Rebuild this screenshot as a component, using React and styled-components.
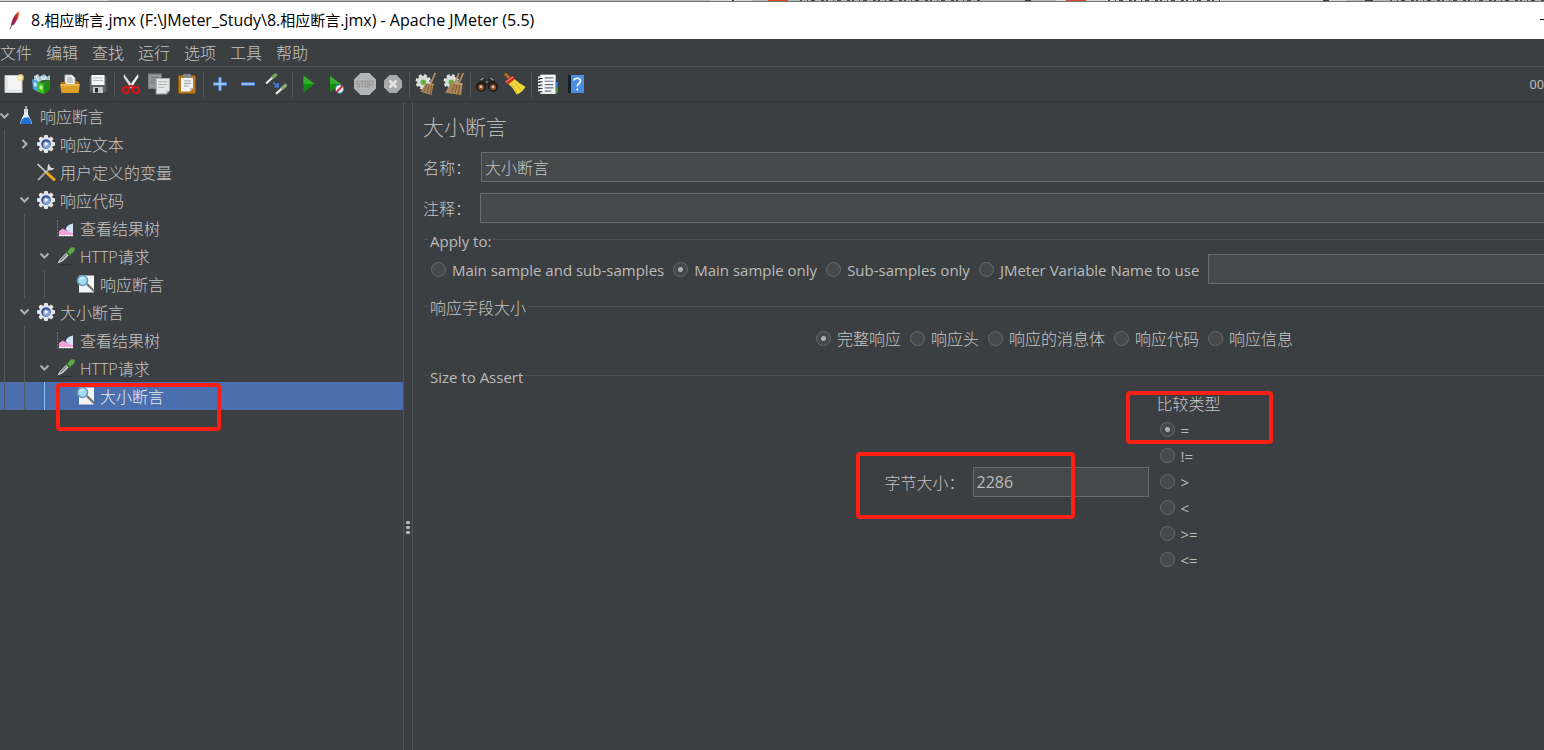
import React from 'react';
import styled, { createGlobalStyle } from 'styled-components';

const color = {
  bg: '#3c3f41',
  text: '#bbbbbb',
  thinText: '#c6c6c6',
  line: '#515456',
  field: '#45494a',
  fieldBorder: '#696b6c',
  selection: '#4b6eaf',
  mark: '#ff1f14',
};

const GlobalStyle = createGlobalStyle`
  *, *::before, *::after { box-sizing: border-box; }
  html, body { margin: 0; background: ${color.bg}; }
  body {
    font-family: 'Open Sans', 'Noto Sans CJK SC', sans-serif;
    font-size: 15px;
    color: ${color.text};
    overflow-x: hidden;
  }
`;

/* ---------- window frame ---------- */

const Window = styled.div`
  display: flex;
  flex-direction: column;
  min-height: 100vh;
  background: ${color.bg};
`;

const BackgroundTabs = styled.svg`
  display: block;
  width: 100%;
  height: 2px;
  background: #b5bcbe;
`;

const TitleBar = styled.header`
  display: flex;
  align-items: center;
  height: 37px;
  padding-left: 7px;
  gap: 8px;
  background: #ffffff;
  color: #000000;
`;

const Title = styled.h1`
  margin: 0;
  padding-bottom: 2px;
  font-size: 16px;
  line-height: 20px;
  font-weight: 400;
  white-space: nowrap;
`;

const PlanName = styled.span`
  font-size: 15px;
`;

const MinimizeButton = styled.button`
  width: 4px;
  height: 20px;
  margin-left: auto;
  padding: 0;
  border: 0;
  background: linear-gradient(#000, #000) 0 8px / 4px 1px no-repeat;
`;

const MenuBar = styled.nav`
  display: flex;
  align-items: center;
  gap: 14px;
  height: 28px;
  border-bottom: 1px solid ${color.line};
`;

const MenuButton = styled.button`
  padding: 0;
  border: 0;
  background: none;
  color: ${color.thinText};
  font-family: inherit;
  font-size: 16px;
  font-weight: 300;
  line-height: 24px;
`;

const ToolBar = styled.div`
  display: flex;
  align-items: center;
  height: 35px;
  border-bottom: 1px solid #333638;
`;

const ToolButton = styled.button`
  display: flex;
  flex: none;
  align-items: center;
  justify-content: center;
  width: 28px;
  height: 28px;
  padding: 0;
  border: 0;
  background: none;
`;

const ToolSeparator = styled.span`
  flex: none;
  width: 1px;
  height: 25px;
  margin: 0 2px;
  background: #55585a;
`;

const Timer = styled.span`
  margin-left: auto;
  font-family: Roboto, sans-serif;
  font-size: 13px;
  white-space: nowrap;
`;

const Workspace = styled.main`
  display: flex;
  flex: 1;
`;

/* ---------- tree ---------- */

const TreePane = styled.ul`
  flex: none;
  width: 403px;
  margin: 0;
  padding: 0;
  list-style: none;
`;

const TreeRow = styled.li`
  position: relative;
  display: flex;
  align-items: center;
  height: 28px;
  font-size: 16px;
  font-weight: 300;
  background: ${(p) => (p.$selected ? color.selection : 'transparent')};
  color: ${(p) => (p.$selected ? '#eaeaea' : color.thinText)};
`;

const Guide = styled.span`
  flex: none;
  width: 20px;
  height: 28px;
  padding-left: 4px;

  &::before {
    content: '';
    display: block;
    width: 1px;
    height: 100%;
    background: ${(p) => (p.$active ? '#7cc0f5' : '#565a5c')};
  }
`;

const Twisty = styled.span`
  display: flex;
  flex: none;
  width: 16px;
  height: 28px;
  align-items: center;
`;

const NodeIcon = styled.span`
  display: flex;
  flex: none;
  width: 20px;
  margin-right: 4px;
`;

const NodeName = styled.span`
  padding-top: 2px;
  line-height: 26px;
  white-space: nowrap;
`;

/* ---------- splitter ---------- */

const Splitter = styled.div`
  display: flex;
  flex: none;
  flex-direction: column;
  align-items: center;
  gap: 2px;
  width: 10px;
  padding-top: 419px;
  border: solid ${color.line};
  border-width: 0 1px;
`;

const Grip = styled.i`
  width: 4px;
  height: 3px;
  border-radius: 1px;
  background: #b0b2b3;
`;

/* ---------- form ---------- */

const Form = styled.form`
  flex: 1;
  min-width: 0;
  padding: 12px 0 0 10px;
`;

const Heading = styled.h2`
  margin: 0 0 12px;
  font-size: 21px;
  line-height: 26px;
  font-weight: 300;
`;

const Fields = styled.div`
  display: flex;
  flex-direction: column;
  gap: 11px;
`;

const FieldRow = styled.div`
  display: flex;
  align-items: center;
`;

const FieldLabel = styled.label`
  flex: none;
  width: ${(p) => p.$width}px;
  padding-top: 2px;
  color: ${color.thinText};
  font-size: 16px;
  font-weight: 300;
  line-height: 28px;
  white-space: nowrap;
`;

const TextField = styled.input`
  flex: ${(p) => (p.$width ? 'none' : 1)};
  width: ${(p) => (p.$width ? p.$width + 'px' : 'auto')};
  min-width: 0;
  height: 30px;
  padding: 0 3px;
  border: 1px solid ${color.fieldBorder};
  border-right-width: ${(p) => (p.$width ? 1 : 0)}px;
  border-radius: 0;
  outline: 0;
  background: ${color.field};
  color: ${(p) => (p.$cjk ? color.thinText : color.text)};
  font-family: inherit;
  font-size: 16px;
  font-weight: ${(p) => (p.$cjk ? 300 : 400)};
`;

const Group = styled.fieldset`
  min-width: 0;
  margin: ${(p) => p.$space}px 0 0 2px;
  padding: 0;
  border: 0;
  border-top: 1px solid ${color.line};
`;

const GroupTitle = styled.legend`
  height: 20px;
  margin-left: 3px;
  padding: 2px 2px 0;
  line-height: 20px;
  color: ${(p) => (p.$cjk ? color.thinText : color.text)};
  font-size: ${(p) => (p.$cjk ? 16 : 15)}px;
  font-weight: ${(p) => (p.$cjk ? 300 : 400)};
`;

const OptionRow = styled.div`
  display: flex;
  align-items: center;
  height: 30px;
  gap: 9px;
  margin-top: ${(p) => p.$top}px;
  padding-left: ${(p) => p.$indent}px;
  justify-content: ${(p) => (p.$center ? 'center' : 'flex-start')};
`;

const OptionLabel = styled.label`
  display: flex;
  flex: none;
  align-items: center;
  gap: 6px;
  height: 26px;
  color: ${(p) => (p.$cjk ? color.thinText : color.text)};
  font-size: ${(p) => (p.$cjk ? 16 : 15)}px;
  font-weight: ${(p) => (p.$cjk ? 300 : 400)};
  line-height: 26px;
  white-space: nowrap;
`;

const OptionText = styled.span`
  padding-top: 2px;
  line-height: 24px;
`;

const Radio = styled.input`
  appearance: none;
  flex: none;
  width: 15px;
  height: 15px;
  margin: 0;
  border: 1px solid ${color.fieldBorder};
  border-radius: 50%;
  background: ${color.field};

  &:checked {
    background: radial-gradient(circle, #adadad 2px, ${color.field} 3px);
  }
`;

const SizeRow = styled.div`
  display: flex;
  align-items: center;
  justify-content: center;
  gap: 8px;
  margin-top: 7px;
  padding-left: 140px;
`;

const ByteSize = styled.div`
  position: relative;
  display: flex;
  align-items: center;
`;

const Comparison = styled.div`
  position: relative;
  width: 68px;
`;

const ComparisonTitle = styled.div`
  height: 24px;
  color: ${color.thinText};
  font-size: 16px;
  font-weight: 300;
  line-height: 24px;
`;

const ComparisonOptions = styled.div`
  display: flex;
  flex-direction: column;
  padding-left: 3px;
`;

const Mark = styled.span`
  position: absolute;
  z-index: 1;
  left: ${(p) => p.$x}px;
  top: ${(p) => p.$y}px;
  width: ${(p) => p.$w}px;
  height: ${(p) => p.$h}px;
  border: 4px solid ${color.mark};
  border-radius: 4px;
  pointer-events: none;
`;

/* ---------- icons ---------- */

const Svg = ({ size = 20, children }) => (
  <svg width={size} height={size} viewBox="0 0 20 20" aria-hidden="true">
    {children}
  </svg>
);

const FeatherIcon = () => (
  <svg width="16" height="20" viewBox="0 0 16 20" aria-hidden="true">
    <defs>
      <linearGradient id="feather" x1="1" y1="0" x2="0" y2="1">
        <stop offset="0" stopColor="#f49a23" />
        <stop offset=".45" stopColor="#d8232f" />
        <stop offset="1" stopColor="#6a2468" />
      </linearGradient>
    </defs>
    <path d="M12.500 0C8.500 2 5 7 4 14.500L6.500 14C10 10 12.500 5 12.500 0Z" fill="url(#feather)" />
    <path d="M10.500 3L5 13.500L3 18" stroke="#7c2350" strokeWidth=".8" fill="none" />
  </svg>
);

const NewIcon = () => (
  <Svg>
    <path d="M1 1.500H18V18.500H1Z" fill="#f4f4f4" stroke="#c9c9c9" />
    <path d="M3 3V17M4 16.500H17" stroke="#d8d8d8" />
    <circle cx="16.500" cy="3.500" r="3.500" fill="#f2e27a" opacity=".75" />
    <circle cx="16.500" cy="3.500" r="1.600" fill="#fffce0" />
  </Svg>
);

const TemplatesIcon = () => (
  <Svg>
    <path d="M2 2L6 0L8 3L12 0L15 3L18 1V10H2Z" fill="#a8c8d4" />
    <path d="M4 2L7 8M9 2L12 8M14 2L11 8" stroke="#e8f3f7" strokeWidth="1.300" />
    <path d="M0 5L6 7V18L1 15Z" fill="#4ba4dc" />
    <path d="M1.500 8L4.500 9V13L2 12Z" fill="#c5e6f8" />
    <path d="M6 8L12 10V20L6 18Z" fill="#35c01d" />
    <path d="M12 10L18 6V16L12 20Z" fill="#1d8a10" />
    <path d="M7.500 11L10.500 12V16L7.500 15Z" fill="#b8f0a5" />
    <path d="M6 8L11 6L18 6L12 10Z" fill="#2c6f25" />
  </Svg>
);

const OpenIcon = () => (
  <Svg>
    <path d="M5 1H12L15 4V12H5Z" fill="#f3f3f3" stroke="#b9b9b9" />
    <path d="M7 4H12M7 6H13M7 8H13" stroke="#9a9a9a" />
    <path d="M1 8H5L6 10H15L16 7L19 8V18H1Z" fill="#b9780c" />
    <path d="M0 10H20L18.500 19H1.500Z" fill="#dda02a" />
    <path d="M1 11H19" stroke="#f8d480" />
  </Svg>
);

const SaveIcon = () => (
  <Svg>
    <path d="M1 1.500H19V19H2.500L1 17.500Z" fill="#596167" stroke="#33383b" />
    <rect x="3.500" y="1" width="13" height="10" fill="#f3f6f8" />
    <path d="M5 4H15M5 6.500H15" stroke="#a8c0d4" />
    <rect x="5" y="13" width="10" height="6" fill="#c5c9cb" />
    <rect x="7" y="14" width="3" height="4.500" fill="#24282a" />
  </Svg>
);

const CutIcon = () => (
  <Svg>
    <path d="M3 0L12.500 13L10 14.500L2.500 3Z" fill="#d8dadb" />
    <path d="M17 0L7.500 13L10 14.500L17.500 3Z" fill="#f3f3f3" />
    <circle cx="5" cy="16" r="3" fill="none" stroke="#d81414" strokeWidth="2.200" />
    <circle cx="15" cy="16" r="3" fill="none" stroke="#d81414" strokeWidth="2.200" />
    <path d="M7 14L10 11.500L13 14" stroke="#d81414" strokeWidth="2" fill="none" />
  </Svg>
);

const CopyIcon = () => (
  <Svg size={22}>
    <path d="M.500 1H12V14H.500Z" fill="#97999a" stroke="#7f8182" />
    <path d="M2.500 4H10M2.500 6.500H8M2.500 9H7" stroke="#7b7d7e" />
    <path d="M7.500 5H19.500V16L16.500 19H7.500Z" fill="#e6e7e7" stroke="#a9aaaa" />
    <path d="M9.500 8H17.500M9.500 10.500H17.500M9.500 13H15" stroke="#aeb0b0" />
    <path d="M16.500 19V16H19.500Z" fill="#bcbebe" />
  </Svg>
);

const PasteIcon = () => (
  <Svg>
    <rect x="1.500" y="1.500" width="17" height="18" rx="1" fill="#b97a22" stroke="#8a5511" />
    <path d="M4 4H16V14L13 17.500H4Z" fill="#f3f3f3" />
    <rect x="6" y="0" width="8" height="4" rx="1" fill="#858a8c" />
    <path d="M7 7H14M7 9.500H14M7 12H12" stroke="#9b9d9e" />
    <path d="M13 17.500V14H16Z" fill="#bcbebe" />
  </Svg>
);

const PlusIcon = () => (
  <Svg>
    <path d="M10 3V17M3 10H17" stroke="#4b8be0" strokeWidth="3.400" />
    <path d="M10 4V16M4 10H16" stroke="#b5d4fa" strokeWidth="1.300" />
  </Svg>
);

const MinusIcon = () => (
  <Svg>
    <path d="M3 10H17" stroke="#4b8be0" strokeWidth="3.400" />
    <path d="M4 10H16" stroke="#b5d4fa" strokeWidth="1.300" />
  </Svg>
);

const ToggleIcon = () => (
  <Svg size={22}>
    <path d="M1 9.500L7 4" stroke="#e3e6e3" strokeWidth="2" />
    <path d="M6.500 4.500L10.500 1" stroke="#6fa85c" strokeWidth="3" />
    <path d="M10 19L15.500 14" stroke="#e3e6e3" strokeWidth="2" />
    <path d="M15 14.500L19.500 10.500" stroke="#8aad7a" strokeWidth="3" />
    <path d="M7.500 8.500L11.500 12M8.500 12.500H12V9" stroke="#3f7fdc" strokeWidth="1.500" fill="none" />
  </Svg>
);

const RunIcon = () => (
  <Svg>
    <path d="M4.500 1.500L15.500 10L4.500 18.500Z" fill="#168a14" />
    <path d="M4.500 1.500L15.500 10H4.500Z" fill="#35ad2c" />
  </Svg>
);

const RunNoPauseIcon = () => (
  <Svg>
    <path d="M3 2L14 10L3 18Z" fill="#168a14" />
    <path d="M3 2L14 10H3Z" fill="#35ad2c" />
    <circle cx="12.500" cy="15" r="4.200" fill="#e8eff8" stroke="#4c7cc0" />
    <path d="M9.500 18L15.500 12" stroke="#d8262a" strokeWidth="1.800" />
  </Svg>
);

const StopIcon = () => (
  <Svg size={22}>
    <path d="M6 0H14L20 6V14L14 20H6L0 14V6Z" fill="#b4b4b4" />
    <g fill="none" stroke="#9c9c9c" strokeWidth="1.200">
      <path d="M5 7.500H2.500V10H5V12.500H2.500M6 7.500H9M7.500 7.500V13M14 13V7.500H17V10.500H14" />
      <rect x="10" y="7.500" width="2.500" height="5" />
    </g>
  </Svg>
);

const ShutdownIcon = () => (
  <Svg>
    <path d="M6.500 1H13.500L19 6.500V13.500L13.500 19H6.500L1 13.500V6.500Z" fill="#a9a9a9" />
    <path d="M6.500 6.500L13.500 13.500M13.500 6.500L6.500 13.500" stroke="#e4e4e4" strokeWidth="2.600" />
  </Svg>
);

const ClearIcon = ({ all }) => (
  <Svg size={22}>
    <circle cx="7.500" cy="8" r="5.500" fill="#dfe0e0" stroke="#e4e5e5" strokeWidth="3" strokeDasharray="2.400 1.900" />
    <circle cx="7.500" cy="8" r="5" fill="#d9dada" />
    <circle cx="7.500" cy="8.500" r="2.500" fill="#63b43c" />
    <path d="M18.500 0L14.500 9" stroke="#b48d62" strokeWidth="1.600" />
    {all && <path d="M14.500 0L11 9" stroke="#b48d62" strokeWidth="1.600" />}
    <path d={all ? 'M8 8L18 9L16.500 20L2 18Z' : 'M10 9L17 10L15 20L5 17Z'} fill="#a98459" />
    <path d="M11 10L8 17M13 10L11 18M15 10L14 19" stroke="#7c5a36" strokeWidth=".9" />
    <path d="M10 9.500L17 10.500" stroke="#d0ae82" />
  </Svg>
);

const SearchIcon = () => (
  <Svg size={22}>
    <path d="M4 4H8L10 7L12 4H16L19 12H1Z" fill="#2b2a29" />
    <path d="M4 6.500L7 4.500M13 4.500L16 6.500M9 8H11" stroke="#9c9a98" strokeWidth="1.200" />
    <circle cx="4.500" cy="12.500" r="4" fill="#3a2418" stroke="#191817" strokeWidth="1.200" />
    <circle cx="15.500" cy="12.500" r="4" fill="#3a2418" stroke="#191817" strokeWidth="1.200" />
    <circle cx="4.500" cy="13" r="2.600" fill="#93562c" />
    <circle cx="15.500" cy="13" r="2.600" fill="#93562c" />
    <circle cx="4.500" cy="12.500" r="1.200" fill="#d9c8bc" />
    <circle cx="15.500" cy="12.500" r="1.200" fill="#d9c8bc" />
  </Svg>
);

const BroomIcon = () => (
  <Svg size={22}>
    <path d="M1 .500L5.500 5.500" stroke="#b8651d" strokeWidth="2.800" />
    <path d="M3.500 9.500L9 5Q13 9 19.500 12.500Q17 17.500 11.500 19.500Q8 13 3.500 9.500Z" fill="#f0d83a" />
    <path d="M1 7.500L7.500 2.500L10 5.500L3.500 10.500Z" fill="#cf2a1e" />
    <path d="M1.500 8.500L8.500 3.500" stroke="#f2b5a8" strokeWidth=".8" />
    <path d="M7 11L12 18M10 9L16 16" stroke="#d0b128" strokeWidth=".8" />
  </Svg>
);

const LogIcon = () => (
  <Svg size={22}>
    <rect x="3" y="1.500" width="14" height="17.500" fill="#f7f7f7" />
    <path d="M7 4.500H15M7 7.500H15M7 10.500H15M7 13.500H15M7 16.500H13" stroke="#66748a" strokeWidth="1.100" />
    <path d="M1 4H5M1 7H5M1 10H5M1 13H5M1 16H5" stroke="#f7f7f7" strokeWidth="1.800" />
    <path d="M2 5H5M2 8H5M2 11H5M2 14H5M2 17H5" stroke="#1d1d1d" strokeWidth=".9" />
    <rect x="17" y="8" width="2" height="5" fill="#2a7fe0" />
    <rect x="17" y="13" width="2" height="5" fill="#3aa630" />
  </Svg>
);

const HelpIcon = () => (
  <Svg>
    <path d="M2 1H18V19H2Z" fill="#4b8fe2" />
    <path d="M2 1H5V19H2Z" fill="#131c2b" />
    <path d="M8 6.500C8 3.500 14.500 3.500 14.500 7C14.500 9.500 11.300 9.500 11.300 12.500" stroke="#ffffff" strokeWidth="1.600" fill="none" />
    <circle cx="11.300" cy="15.500" r="1.100" fill="#ffffff" />
  </Svg>
);

const FlaskIcon = () => (
  <Svg>
    <path d="M8 3H12V8L16 16.500Q16 18 14 18H6Q4 18 4 16.500L8 8Z" fill="#dfe9f0" />
    <path d="M7 11.500H13L15.500 16.500Q15 18 14 18H6Q5 18 4.500 16.500Z" fill="#1d6fd6" />
    <path d="M10 0V6" stroke="#c3ccd2" strokeWidth="1.500" />
    <path d="M8.500 9L6.500 13" stroke="#ffffff" />
  </Svg>
);

const GearIcon = () => (
  <Svg>
    <g fill="#e4e5e6">
      <circle cx="10" cy="10" r="7" />
      {[0, 45, 90, 135].map((a) => (
        <rect key={a} x="8" y="1" width="4" height="18" rx="1" transform={`rotate(${a} 10 10)`} />
      ))}
    </g>
    <circle cx="10" cy="10" r="4.800" fill="#35589c" />
    <circle cx="10.500" cy="11" r="3.500" fill="#86a8dc" />
    <path d="M8.800 7.800L12.300 10L8.800 12.200Z" fill="#ffffff" />
  </Svg>
);

const ToolsIcon = () => (
  <Svg>
    <path d="M2 18L13 7" stroke="#a2a5a6" strokeWidth="2" />
    <path d="M13 1.500Q10.500 4.500 12 8Q16 9.500 18.500 6L15.500 6L14 4.500Z" fill="#d5d7d8" />
    <path d="M1.500 2L11 11" stroke="#cfd1d2" strokeWidth="1.700" />
    <path d="M11.500 11.500L18 17.500" stroke="#f2a91b" strokeWidth="3" strokeLinecap="round" />
  </Svg>
);

const ChartIcon = () => (
  <Svg>
    <path d="M1.500 2V18.500H18" stroke="#6d6f70" fill="none" strokeDasharray="2 1" />
    <path d="M3 17V13L7 10.500L10 12.500L13 12L17 14V17Z" fill="#f3a0dc" />
    <path d="M9.500 11.500Q11 6.500 17 5.500V15Q13 14 9.500 11.500Z" fill="#cfe4f8" />
    <path d="M3 17.500H17" stroke="#ffffff" />
  </Svg>
);

const DropperIcon = () => (
  <Svg>
    <path d="M1.500 17.500L4 13L10.500 6.500L13 9L7 15Z" fill="#d4d8d6" />
    <path d="M4.500 14.500L10.500 8.500" stroke="#6d7371" strokeWidth="1.200" />
    <path d="M10 5.500L14.500 10" stroke="#3b6e30" strokeWidth="2" />
    <path d="M11.500 6Q14 0 18.500 1.500Q20 5.500 14 8.500Z" fill="#5ba843" />
    <path d="M3 18.500H16" stroke="#313435" />
  </Svg>
);

const MagnifierIcon = () => (
  <Svg>
    <rect x="3" y="1.500" width="15" height="17" fill="#f4f4f4" />
    <path d="M11 10L18.500 17.500" stroke="#6e7375" strokeWidth="2.200" />
    <circle cx="6.500" cy="6.500" r="5" fill="#a9dcf4" stroke="#5f9cbc" strokeWidth="1.600" />
    <path d="M4 5.500Q5 3.500 7.500 3.500" stroke="#ffffff" fill="none" />
  </Svg>
);

const Arrow = ({ open }) => (
  <svg width="10" height="10" viewBox="0 0 10 10" aria-hidden="true">
    <path
      d={open ? 'M.500 2.500L4.500 6.500L8.500 2.500' : 'M2.500 1L6.500 5L2.500 9'}
      fill="none"
      stroke="#adb0b1"
      strokeWidth="2"
    />
  </svg>
);

/* ---------- data ---------- */

const menus = ['文件', '编辑', '查找', '运行', '选项', '工具', '帮助'];

const tools = [
  [['新建', NewIcon], ['模板', TemplatesIcon], ['打开', OpenIcon], ['保存', SaveIcon]],
  [['剪切', CutIcon], ['复制', CopyIcon], ['粘贴', PasteIcon]],
  [['全部展开', PlusIcon], ['全部折叠', MinusIcon], ['切换', ToggleIcon]],
  [['启动', RunIcon], ['不停顿开始', RunNoPauseIcon], ['停止', StopIcon], ['关闭', ShutdownIcon]],
  [['清除', ClearIcon], ['清除全部', () => <ClearIcon all />]],
  [['查找', SearchIcon], ['重置搜索', BroomIcon]],
  [['函数助手', LogIcon], ['帮助', HelpIcon]],
];

const nodes = [
  { depth: 0, name: '响应断言', icon: FlaskIcon, arrow: 'open' },
  { depth: 1, name: '响应文本', icon: GearIcon, arrow: 'closed' },
  { depth: 1, name: '用户定义的变量', icon: ToolsIcon },
  { depth: 1, name: '响应代码', icon: GearIcon, arrow: 'open' },
  { depth: 2, name: '查看结果树', icon: ChartIcon },
  { depth: 2, name: 'HTTP请求', icon: DropperIcon, arrow: 'open' },
  { depth: 3, name: '响应断言', icon: MagnifierIcon },
  { depth: 1, name: '大小断言', icon: GearIcon, arrow: 'open' },
  { depth: 2, name: '查看结果树', icon: ChartIcon },
  { depth: 2, name: 'HTTP请求', icon: DropperIcon, arrow: 'open' },
  { depth: 3, name: '大小断言', icon: MagnifierIcon, selected: true },
];

const applyTo = ['Main sample and sub-samples', 'Main sample only', 'Sub-samples only', 'JMeter Variable Name to use'];
const responseFields = ['完整响应', '响应头', '响应的消息体', '响应代码', '响应信息'];
const comparisons = ['=', '!=', '>', '<', '>=', '<='];

const Option = ({ name, label, checked, cjk }) => (
  <OptionLabel $cjk={cjk}>
    <Radio type="radio" name={name} defaultChecked={checked} />
    <OptionText>{label}</OptionText>
  </OptionLabel>
);

export default function App() {
  return (
    <Window>
      <GlobalStyle />
      <BackgroundTabs aria-hidden="true">
        <rect width="108" height="1" fill="#d6d9d6" />
        <rect x="710" width="42" height="1" fill="#d6d9d6" />
        <rect x="1056" width="290" height="1" fill="#d6d9d6" />
        <rect x="768" width="20" height="1" fill="#d8492b" />
        <rect x="1066" width="20" height="1" fill="#d8492b" />
        <path d="M800 .500H982M1108 .500H1220M1390 .500H1544" stroke="#4a4d4e" strokeDasharray="2 5 1 3 4 6 3 2" />
        <path d="M1025 .500H1031M1323 .500H1329M1365 .500H1373M732 .500H734" stroke="#3a3c3d" />
        <rect y="1" width="100%" height="1" fill="#6f7374" />
      </BackgroundTabs>

      <TitleBar>
        <FeatherIcon />
        <Title>
          8.<PlanName>相应断言</PlanName>
          {'.jmx (F:\\JMeter_Study\\8.'}
          <PlanName>相应断言</PlanName>
          .jmx) - Apache JMeter (5.5)
        </Title>
        <MinimizeButton type="button" aria-label="最小化" />
      </TitleBar>

      <MenuBar>
        {menus.map((m) => (
          <MenuButton key={m} type="button">{m}</MenuButton>
        ))}
      </MenuBar>

      <ToolBar>
        {tools.map((group, i) => (
          <React.Fragment key={i}>
            {i > 0 && <ToolSeparator />}
            {group.map(([label, Icon]) => (
              <ToolButton key={label} type="button" aria-label={label}>
                <Icon />
              </ToolButton>
            ))}
          </React.Fragment>
        ))}
        <Timer>00</Timer>
      </ToolBar>

      <Workspace>
        <TreePane>
          {nodes.map(({ depth, name, icon: Icon, arrow, selected }, i) => (
            <TreeRow key={i} $selected={selected}>
              {Array.from({ length: depth }, (_, d) => (
                <Guide key={d} $active={selected && d === depth - 1} />
              ))}
              <Twisty>{arrow && <Arrow open={arrow === 'open'} />}</Twisty>
              <NodeIcon><Icon /></NodeIcon>
              <NodeName>{name}</NodeName>
              {selected && <Mark $x={56} $y={1} $w={165} $h={48} />}
            </TreeRow>
          ))}
        </TreePane>

        <Splitter>
          <Grip />
          <Grip />
          <Grip />
        </Splitter>

        <Form onSubmit={(e) => e.preventDefault()}>
          <Heading>大小断言</Heading>
          <Fields>
            <FieldRow>
              <FieldLabel htmlFor="name" $width={58}>名称：</FieldLabel>
              <TextField id="name" defaultValue="大小断言" $cjk />
            </FieldRow>
            <FieldRow>
              <FieldLabel htmlFor="comment" $width={57}>注释：</FieldLabel>
              <TextField id="comment" />
            </FieldRow>
          </Fields>

          <Group $space={6}>
            <GroupTitle>Apply to:</GroupTitle>
            <OptionRow $top={5} $indent={6}>
              {applyTo.map((label, i) => (
                <Option key={label} name="apply" label={label} checked={i === 1} />
              ))}
              <TextField aria-label="JMeter Variable Name" />
            </OptionRow>
          </Group>

          <Group $space={12}>
            <GroupTitle $cjk>响应字段大小</GroupTitle>
            <OptionRow $top={7} $indent={140} $center>
              {responseFields.map((label, i) => (
                <Option key={label} name="field" label={label} checked={i === 0} cjk />
              ))}
            </OptionRow>
          </Group>

          <Group $space={12}>
            <GroupTitle>Size to Assert</GroupTitle>
            <SizeRow>
              <ByteSize>
                <FieldLabel htmlFor="size" $width={88}>字节大小：</FieldLabel>
                <TextField id="size" defaultValue="2286" $width={176} />
                <Mark $x={-29} $y={-15} $w={219} $h={67} />
              </ByteSize>
              <Comparison role="radiogroup" aria-label="比较类型">
                <ComparisonTitle>比较类型</ComparisonTitle>
                <ComparisonOptions>
                  {comparisons.map((label, i) => (
                    <Option key={label} name="compare" label={label} checked={i === 0} />
                  ))}
                </ComparisonOptions>
                <Mark $x={-31} $y={-1} $w={147} $h={53} />
              </Comparison>
            </SizeRow>
          </Group>
        </Form>
      </Workspace>
    </Window>
  );
}
